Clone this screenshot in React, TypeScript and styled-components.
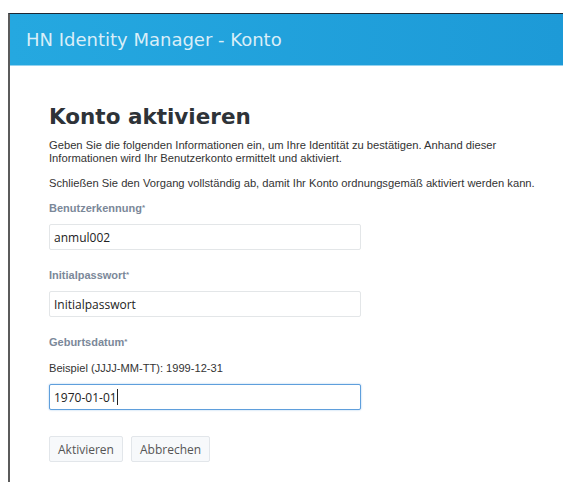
import React from "react";
import styled, { createGlobalStyle } from "styled-components";

const GlobalStyle = createGlobalStyle`
  html, body {
    margin: 0;
    padding: 0;
    background: #fff;
  }
`;

const Window = styled.div`
  margin: 13px 0 0 8px;
  border-left: 2px solid #5b5b5b;
  border-top: 1px solid #1c2733;
  min-height: 469px;
  box-sizing: border-box;
`;

const Header = styled.div`
  height: 51px;
  display: flex;
  align-items: center;
  padding-left: 16px;
  background: linear-gradient(to right, #25a8e0, #1d9ad7);
  border-bottom: 1px solid #93d2ef;
  font-family: "DejaVu Sans", sans-serif;
  font-size: 18px;
  color: #d9eef8;
`;

const Content = styled.div`
  padding: 38px 0 0 39px;
  font-family: "Liberation Sans", Arial, sans-serif;
  color: #333;
`;

const Title = styled.h1`
  margin: 0 0 10px;
  font-family: "DejaVu Sans", sans-serif;
  font-weight: bold;
  font-size: 21.5px;
  color: #2e3338;
`;

const Text = styled.p`
  margin: 0 0 12px;
  font-size: 11.2px;
  line-height: 13px;
  width: 490px;
`;

const Label = styled.label`
  display: block;
  margin: 12px 0 10px;
  font-size: 11px;
  font-weight: bold;
  color: #7b8899;
`;

const Star = styled.span`
  font-size: 8px;
  vertical-align: 2px;
`;

const Hint = styled.div`
  margin: 14px 0 10px;
  font-size: 11.1px;
`;

const Input = styled.input<{ $focused?: boolean }>`
  display: block;
  box-sizing: border-box;
  width: 312px;
  height: 26px;
  padding: 0 4px;
  margin-bottom: 19px;
  font-family: "Open Sans", sans-serif;
  font-size: 12px;
  color: #222;
  background: #fff;
  border: 1px solid ${({ $focused }) => ($focused ? "#5f9fdc" : "#e3e6e8")};
  border-radius: 2px;
  box-shadow: ${({ $focused }) => ($focused ? "0 0 2px #9cc4ec" : "none")};
  outline: none;
`;

const FieldWrap = styled.div`
  position: relative;
`;

// text cursor drawn over the focused field
const Caret = styled.span`
  position: absolute;
  left: 68px;
  top: 5px;
  width: 1px;
  height: 16px;
  background: #222;
`;

const Buttons = styled.div`
  display: flex;
  gap: 8px;
  margin-top: 26px;
`;

const Button = styled.button`
  height: 26px;
  padding: 0 8px;
  font-family: "Open Sans", sans-serif;
  font-size: 12px;
  color: #555;
  background: #f7f9fb;
  border: 1px solid #e2e6ea;
  border-radius: 2px;
`;

const Field: React.FC<{ label: string }> = ({ label }) => (
  <Label>
    {label}
    <Star>*</Star>
  </Label>
);

const App: React.FC = () => {
  return (
    <>
      <GlobalStyle />
      <Window>
        <Header>HN Identity Manager - Konto</Header>
        <Content>
          <Title>Konto aktivieren</Title>
          <Text>
            Geben Sie die folgenden Informationen ein, um Ihre Identität zu bestätigen. Anhand dieser
            Informationen wird Ihr Benutzerkonto ermittelt und aktiviert.
          </Text>
          <Text>
            Schließen Sie den Vorgang vollständig ab, damit Ihr Konto ordnungsgemäß aktiviert werden kann.
          </Text>
          <Field label="Benutzerkennung" />
          <Input defaultValue="anmul002" />
          <Field label="Initialpasswort" />
          <Input defaultValue="Initialpasswort" />
          <Field label="Geburtsdatum" />
          <Hint>Beispiel (JJJJ-MM-TT): 1999-12-31</Hint>
          <FieldWrap>
            <Input $focused defaultValue="1970-01-01" />
            <Caret />
          </FieldWrap>
          <Buttons>
            <Button>Aktivieren</Button>
            <Button>Abbrechen</Button>
          </Buttons>
        </Content>
      </Window>
    </>
  );
};

export default App;
